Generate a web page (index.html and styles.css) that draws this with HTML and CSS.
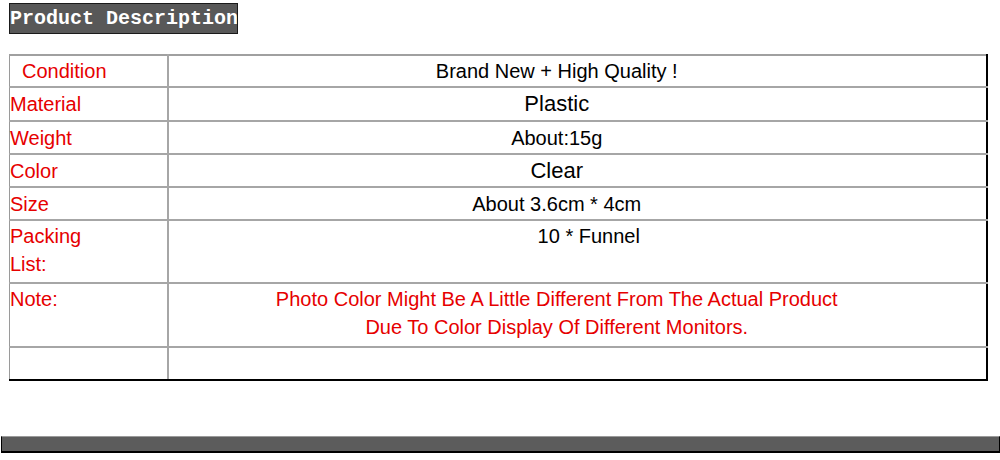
FILE: index.html
```html
<!DOCTYPE html>
<html>
<head>
<meta charset="utf-8">
<link rel="stylesheet" href="styles.css">
</head>
<body>
<div class="page">
  <div class="title">Product Description</div>
  <table class="spec">
    <colgroup><col class="c1"><col class="c2"></colgroup>
    <tr class="r32"><td class="k pad">Condition</td><td class="v">Brand New + High Quality !</td></tr>
    <tr class="r34"><td class="k">Material</td><td class="v big">Plastic</td></tr>
    <tr class="r33"><td class="k">Weight</td><td class="v">About:15g</td></tr>
    <tr class="r33"><td class="k">Color</td><td class="v big">Clear</td></tr>
    <tr class="r33"><td class="k">Size</td><td class="v">About 3.6cm * 4cm</td></tr>
    <tr class="r63 top"><td class="k">Packing<br>List:</td><td class="v shift">10 * Funnel</td></tr>
    <tr class="r64 top"><td class="k">Note:</td><td class="v red">Photo Color Might Be A Little Different From The Actual Product<br>Due To Color Display Of Different Monitors.</td></tr>
    <tr class="r33 last"><td class="k"></td><td class="v"></td></tr>
  </table>
  <div class="bar"></div>
</div>
</body>
</html>
```
FILE: styles.css
```css
html, body { margin: 0; padding: 0; background: #fff; }
.page { padding: 3px 0 0 9px; font-family: "Liberation Sans", Arial, sans-serif; }
.title {
  display: block;
  box-sizing: border-box;
  height: 31px;
  width: 229px;
  background: #585858;
  border: 1px solid #1a1a1a;
  color: #fff;
  font-family: "Liberation Mono", "Courier New", monospace;
  font-weight: bold;
  font-size: 20px;
  line-height: 29px;
  white-space: nowrap;
  overflow: hidden;
}
.spec {
  margin-top: 20px;
  width: 979px;
  border-collapse: collapse;
  table-layout: fixed;
  font-size: 20px;
}
.c1 { width: 158px; }
.spec td {
  border: 2px solid #a6a6a6;
  padding: 0;
  line-height: 28px;
  vertical-align: middle;
}
.spec td:first-child { border-left: 1px solid #9a9a9a; }
.spec td:last-child { border-right: 2px solid #000; }
.spec tr:first-child td { border-top: 2px solid #a0a0a0; }
.spec tr.last td { border-bottom: 2px solid #000; }
.r32 { height: 32px; }
.r33 { height: 33px; }
.r34 { height: 34px; }
.r63 { height: 63px; }
.r64 { height: 64px; }
.top td { vertical-align: top; padding-top: 1px; }
.k { color: #e60000; padding-left: 0; }
.k.pad { padding-left: 12px; }
.v { color: #000; text-align: center; padding-right: 41px !important; }
.v.big { font-size: 22px; }
.v.shift { padding-left: 64px; }
.v.red { color: #e60000; }
.bar {
  margin: 55px 0 0 -8px;
  height: 14px;
  background: #5c5c5c;
  border: 1px solid #000;
  border-top: 1px solid #9a9a9a;
  border-bottom: 2px solid #000;
}
```
